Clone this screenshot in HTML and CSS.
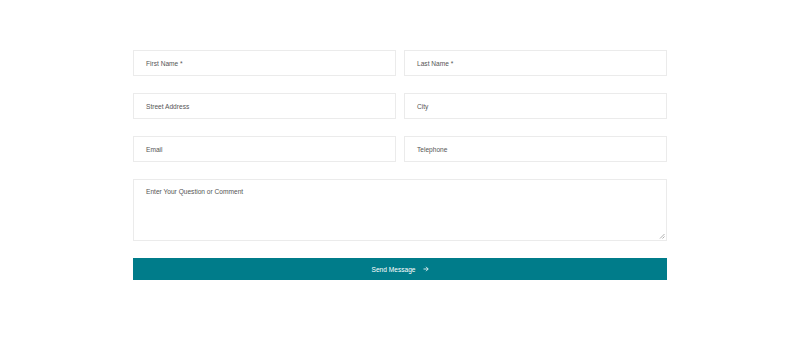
FILE: index.html
```html
<!DOCTYPE html>
<html lang="en">
<head>
<meta charset="utf-8">
<title>Contact Form</title>
<link rel="stylesheet" href="styles.css">
</head>
<body>
<form class="form">
  <div class="row">
    <div class="field"><span>First Name *</span></div>
    <div class="field"><span>Last Name *</span></div>
  </div>
  <div class="row">
    <div class="field"><span>Street Address</span></div>
    <div class="field"><span>City</span></div>
  </div>
  <div class="row">
    <div class="field"><span>Email</span></div>
    <div class="field"><span>Telephone</span></div>
  </div>
  <div class="area">
    <span>Enter Your Question or Comment</span>
    <svg class="grip" width="6" height="6" viewBox="0 0 6 6"><path d="M5.5 1 L1 5.5 M5.5 3.5 L3.5 5.5" stroke="#999" stroke-width="0.8" fill="none"/></svg>
  </div>
  <div class="button">Send Message
    <svg class="arrow" width="6" height="6" viewBox="0 0 6 6"><path d="M0.5 3 H5.2 M3 0.8 L5.2 3 L3 5.2" stroke="#ffffff" stroke-width="0.8" fill="none"/></svg>
  </div>
</form>
</body>
</html>
```
FILE: styles.css
```css
*, *::before, *::after {
  box-sizing: border-box;
}
html, body {
  margin: 0;
  padding: 0;
  background: #ffffff;
}
body {
  font-family: "Liberation Sans", Arial, sans-serif;
  font-size: 6.6px;
  color: #555555;
}
.form {
  width: 534px;
  margin: 50px auto 0;
  display: flex;
  flex-direction: column;
  gap: 17px;
}
.row {
  display: grid;
  grid-template-columns: 1fr 1fr;
  gap: 8px;
}
.field {
  height: 26px;
  border: 1px solid #ebebeb;
  display: flex;
  align-items: center;
  padding-left: 12px;
}
.area {
  position: relative;
  height: 62px;
  border: 1px solid #ebebeb;
  padding: 8px 12px;
}
.grip {
  position: absolute;
  right: 1px;
  bottom: 1px;
}
.button {
  height: 22px;
  background: #007c8a;
  color: #ffffff;
  display: flex;
  align-items: center;
  justify-content: center;
  gap: 7px;
}
```
